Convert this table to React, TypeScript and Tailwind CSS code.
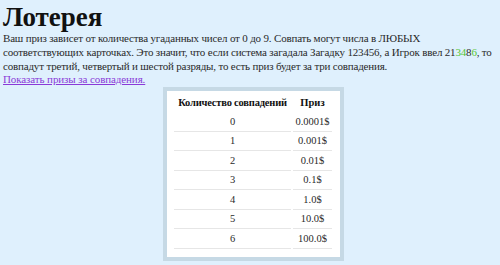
import React from "react";

const rows: [string, string][] = [
  ["0", "0.0001$"],
  ["1", "0.001$"],
  ["2", "0.01$"],
  ["3", "0.1$"],
  ["4", "1.0$"],
  ["5", "10.0$"],
  ["6", "100.0$"],
];

export default function App() {
  return (
    <div
      className="w-[500px] h-[265px] overflow-hidden bg-[#dff0fd] text-[#2a2a2a] px-[3px]"
      style={{ fontFamily: '"Liberation Serif", "Times New Roman", serif' }}
    >
      <h1 className="text-[27px] font-bold text-[#111] leading-[30px] mt-[2px]">Лотерея</h1>
      <p className="text-[11px] leading-[13.8px] tracking-[-0.18px]">
        Ваш приз зависет от количества угаданных чисел от 0 до 9. Совпать могут числа в ЛЮБЫХ
        соответствующих карточках. Это значит, что если система загадала Загадку 123456, а Игрок ввел 21
        <span className="text-[#55c533]">34</span>8<span className="text-[#55c533]">6</span>,&nbsp;то
        совпадут третий, четвертый и шестой разряды, то есть приз будет за три совпадения.
      </p>
      <a href="#" className="block w-fit text-[11px] leading-[13.8px] tracking-[-0.1px] text-[#8a3ad8] underline">
        Показать призы за совпадения.
      </a>
      <div className="ml-[160px] w-[181px] border-[4px] border-[#c6d9e5] bg-white pl-[7px] pt-[2px] pb-[8px]">
        <table className="border-separate border-spacing-x-[2px] border-spacing-y-0 text-[10.5px] -ml-[2px]">
          <thead>
            <tr>
              <th className="w-[117px] h-[19px] font-bold text-[#111] text-center p-0 whitespace-nowrap tracking-[-0.2px]">Количество совпадений</th>
              <th className="w-[39px] h-[19px] font-bold text-[#111] text-center p-0 whitespace-nowrap">Приз</th>
            </tr>
          </thead>
          <tbody>
            {rows.map(([a, b]) => (
              <tr key={a}>
                <td className="h-[19.5px] text-center p-0 border-b border-[#e6e6e6]">{a}</td>
                <td className="h-[19.5px] text-center p-0 border-b border-[#e6e6e6]">{b}</td>
              </tr>
            ))}
          </tbody>
        </table>
      </div>
    </div>
  );
}
